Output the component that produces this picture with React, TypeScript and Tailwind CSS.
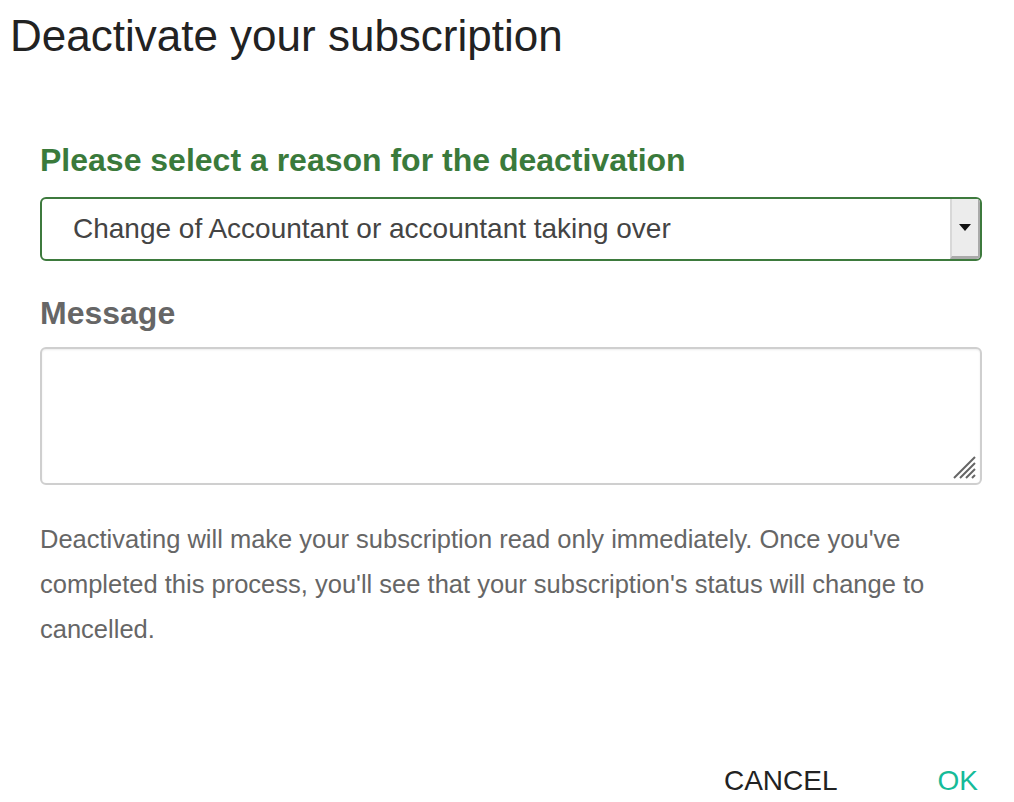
import React from "react";

export default function App() {
  return (
    <div className="w-[1014px] h-[802px] bg-white overflow-hidden font-['Liberation_Sans',Arial,sans-serif]">
      <h1 className="pl-[10px] pt-[10px] text-[44px] leading-[52px] text-[#222]">Deactivate your subscription</h1>
      <div className="px-[40px] pt-[80px]">
        <div className="text-[32px] leading-[36px] font-bold text-[#3a7a3b]">Please select a reason for the deactivation</div>
        <div className="mt-[19px] h-[64px] w-[942px] border-2 border-[#3d7a3d] rounded-[6px] flex items-stretch overflow-hidden">
          <div className="flex-1 flex items-center pl-[31px] text-[28px] text-[#444]">Change of Accountant or accountant taking over</div>
          <div className="w-[30px] bg-[#ececec] border-l-2 border-[#d8d8d8] border-b-[3px] border-b-[#aaa] border-r-[2px] border-r-[#aaa] flex items-center justify-center">
            <svg width="12" height="7" viewBox="0 0 12 7"><path d="M0 0 L12 0 L6 7 Z" fill="#111" /></svg>
          </div>
        </div>
        <div className="mt-[34px] text-[32px] leading-[36px] font-bold text-[#666]">Message</div>
        <div className="relative mt-[16px] h-[138px] w-[942px] border-2 border-[#cfcfcf] rounded-[6px] bg-white shadow-[inset_0_1px_2px_rgba(0,0,0,0.08)]">
          <svg className="absolute right-[3px] bottom-[3px]" width="26" height="26" viewBox="0 0 26 26">
            <path d="M24 3 L3 24 M24 9 L9 24 M24 15 L15 24 M24 21 L21 24" stroke="#666" strokeWidth="2" />
          </svg>
        </div>
        <p className="mt-[32px] text-[25.5px] leading-[45px] text-[#666]">
          Deactivating will make your subscription read only immediately. Once you've completed this process, you'll see that your subscription's status will change to cancelled.
        </p>
      </div>
      <div className="flex justify-end items-center gap-[100px] pr-[36px] mt-[108px]">
        <button className="text-[28px] text-[#222]">CANCEL</button>
        <button className="text-[28px] text-[#16bb99]">OK</button>
      </div>
    </div>
  );
}
